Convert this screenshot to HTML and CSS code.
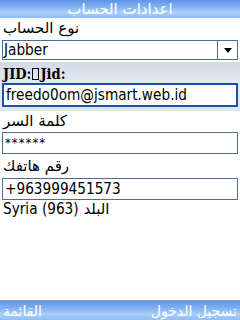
FILE: index.html
```html
<!DOCTYPE html>
<html>
<head>
<meta charset="utf-8">
<link rel="stylesheet" href="styles.css">
</head>
<body>
<div class="screen">
  <div class="titlebar">اعدادات الحساب</div>
  <div class="content">
    <div class="field first">
      <div class="label">نوع الحساب</div>
      <div class="select">
        <span class="select-text">Jabber</span>
        <span class="select-arrow"><span class="tri"></span></span>
      </div>
    </div>
    <div class="field focused">
      <div class="label bold">JID:<span class="nobox"></span>Jid:</div>
      <div class="input active">freedo0om@jsmart.web.id</div>
    </div>
    <div class="field">
      <div class="label">كلمة السر</div>
      <div class="input pw">******</div>
    </div>
    <div class="field last">
      <div class="label">رقم هاتفك</div>
      <div class="input">+963999451573</div>
      <div class="label country"><span class="latin">Syria (963)</span> البلد</div>
    </div>
  </div>
  <div class="softkeys">
    <span class="sk">القائمة</span>
    <span class="sk">تسجيل الدخول</span>
  </div>
</div>
</body>
</html>
```
FILE: styles.css
```css
html, body {
  margin: 0;
  padding: 0;
}
body {
  width: 240px;
  height: 320px;
  overflow: hidden;
  background: #fff;
  font-family: "DejaVu Sans", sans-serif;
  color: #000;
}
.screen {
  width: 240px;
  height: 320px;
  display: flex;
  flex-direction: column;
}
.titlebar {
  height: 18px;
  line-height: 18px;
  text-align: center;
  color: #fff;
  font-size: 15px;
  background: linear-gradient(#5f93e4 0%, #8ab8f4 45%, #a9d0fa 70%, #8fbcf2 100%);
}
.content {
  flex: 1;
  display: flex;
  flex-direction: column;
}
.field {
  padding: 0 2px 2px 2px;
  display: flex;
  flex-direction: column;
}
.label {
  font-size: 15px;
  line-height: 20px;
  height: 21px;
  padding-left: 1px;
  direction: ltr;
  unicode-bidi: plaintext;
  text-align: left;
}
.first .label {
  height: 22px;
}
.last .label {
  height: 22px;
}
.last .label.country {
  height: 20px;
  line-height: 18px;
}
.label.bold {
  font-family: "DejaVu Serif Condensed", "DejaVu Serif", serif;
  font-weight: bold;
  font-size: 14.5px;
  display: flex;
  align-items: center;
  height: 19px;
}
.nobox {
  display: inline-block;
  width: 5px;
  height: 10px;
  border: 1px solid #000;
  margin: 0 1px;
}
.select {
  height: 18px;
  border: 1px solid #4d6f8f;
  display: flex;
  font-family: "DejaVu Sans Condensed", "DejaVu Sans", sans-serif;
  font-size: 15.2px;
  line-height: 18px;
}
.select-text {
  flex: 1;
  padding-left: 1px;
}
.select-arrow {
  width: 19px;
  border-left: 1px solid #4d6f8f;
  display: flex;
  align-items: center;
  justify-content: center;
}
.tri {
  width: 0;
  height: 0;
  border-left: 4px solid transparent;
  border-right: 4px solid transparent;
  border-top: 5px solid #000;
}
.focused {
  background: linear-gradient(#d3d9e5 0%, #e9ecf2 50%, #dde2ec 100%);
  padding-top: 2px;
  padding-bottom: 4px;
}
.input {
  height: 20px;
  border: 1px solid #4d6f8f;
  background: #fff;
  font-family: "DejaVu Sans Condensed", "DejaVu Sans", sans-serif;
  font-size: 15.2px;
  line-height: 20px;
  padding-left: 2px;
}
.input.active {
  border: 2px solid #1c4fb5;
  height: 20px;
}
.input.pw {
  font-size: 13px;
  letter-spacing: 1px;
}
.latin {
  font-family: "DejaVu Sans Condensed", "DejaVu Sans", sans-serif;
  font-size: 15.2px;
}
.softkeys {
  height: 19px;
  border-top: 1px solid #9aa0a8;
  display: flex;
  justify-content: space-between;
  align-items: center;
  padding: 0 3px;
  color: #fff;
  font-size: 14px;
  background: linear-gradient(#5f93e4 0%, #8ab8f4 45%, #a9d0fa 70%, #8fbcf2 100%);
}
```
